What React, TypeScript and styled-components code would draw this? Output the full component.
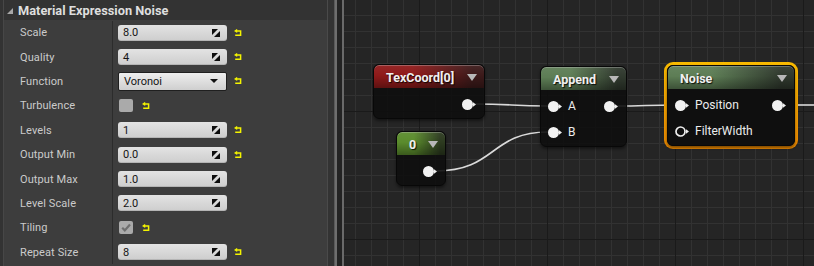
import React from "react";
import styled, { createGlobalStyle } from "styled-components";

const Global = createGlobalStyle`
  html, body { margin: 0; padding: 0; background: #252525; }
  body { font-family: Roboto, "Liberation Sans", sans-serif; }
  #root { width: 814px; height: 266px; }
`;

const Page = styled.div`
  display: flex;
  width: 814px;
  height: 266px;
  overflow: hidden;
`;

/* ---------- details panel ---------- */

const Panel = styled.aside`
  width: 337px;
  flex: none;
  box-sizing: border-box;
  display: flex;
  padding-left: 3px;
  background: #333333;
  border-right: 2px solid #6e6e6e;
`;

const PanelBody = styled.div`
  width: 325px;
  flex: none;
  box-sizing: border-box;
  display: flex;
  flex-direction: column;
  border-left: 1px solid #474747;
  border-right: 1px solid #4a4a4a;
`;

const Gutter = styled.div`
  flex: 1;
  border-right: 1px solid #595959;
`;

const CategoryHeader = styled.div`
  height: 20px;
  flex: none;
  display: flex;
  align-items: center;
  gap: 5px;
  padding-left: 3px;
  font-size: 12.8px;
  font-weight: 700;
  color: #dedede;
`;

const Collapse = styled.span`
  width: 0;
  height: 0;
  border-left: 6px solid transparent;
  border-bottom: 6px solid #a8a8a8;
  margin-top: 1px;
`;

const PropertyList = styled.div`
  flex: 1;
  display: grid;
  grid-auto-rows: 24.4px;
  align-content: start;
  padding-top: 0.5px;
  background: #3d3d3d;
`;

const Row = styled.div`
  display: grid;
  grid-template-columns: 109px 1fr;
`;

const Label = styled.div`
  display: flex;
  align-items: center;
  padding-left: 16px;
  border-right: 1px solid #2c2c2c;
  font-size: 11px;
  color: #cbcbcb;
  letter-spacing: 0.1px;
`;

const Value = styled.div`
  display: flex;
  align-items: center;
  gap: 7px;
  padding-left: 5px;
`;

const NumberBox = styled.div`
  width: 109px;
  height: 16px;
  box-sizing: border-box;
  display: flex;
  align-items: center;
  justify-content: space-between;
  padding: 0 7px 0 5px;
  border-radius: 3px;
  background: linear-gradient(to bottom, #e3e3e3, #cdcdcd);
  box-shadow: inset 0 -1px 0 rgba(0, 0, 0, 0.12);
  font-size: 11px;
  color: #141414;
`;

const ComboBox = styled.div`
  width: 109px;
  height: 19px;
  box-sizing: border-box;
  display: flex;
  align-items: center;
  justify-content: space-between;
  padding: 0 8px 0 5px;
  border: 1px solid #1f1f1f;
  border-radius: 2px;
  background: linear-gradient(to bottom, #eeeeee, #cfcfcf);
  font-size: 11px;
  color: #141414;
`;

const ComboArrow = styled.span`
  width: 0;
  height: 0;
  border-left: 4px solid transparent;
  border-right: 4px solid transparent;
  border-top: 4px solid #111;
`;

const CheckBox = styled.div`
  width: 14px;
  height: 13px;
  margin: 0 2px 0 1px;
  border-radius: 2px;
  background: #aaaaaa;
  display: flex;
  align-items: center;
  justify-content: center;
`;

const DragIcon = () => (
  <svg width="8" height="8" viewBox="0 0 8 8">
    <polygon points="0,0 6,0 0,6" fill="#0d0d0d" />
    <polygon points="8,2 8,8 2,8" fill="#0d0d0d" />
  </svg>
);

const ResetIcon = () => (
  <svg width="8" height="8" viewBox="0 0 8 8" style={{ flex: "none" }}>
    <path d="M2.6 1.9 H6.6 V6.3 H1.2" stroke="#f4f400" strokeWidth="1.5" fill="none" />
    <polygon points="0,1.9 3.2,-0.2 3.2,4" fill="#f4f400" />
  </svg>
);

const CheckMark = () => (
  <svg width="12" height="11" viewBox="0 0 12 11">
    <path d="M2.2 5.8 L4.8 8.4 L10 2.6" stroke="#6e6e6e" strokeWidth="2.2" fill="none" />
  </svg>
);

type Prop =
  | { label: string; kind: "number"; value: string; reset?: boolean }
  | { label: string; kind: "combo"; value: string; reset?: boolean }
  | { label: string; kind: "check"; checked: boolean; reset?: boolean };

const props: Prop[] = [
  { label: "Scale", kind: "number", value: "8.0", reset: true },
  { label: "Quality", kind: "number", value: "4", reset: true },
  { label: "Function", kind: "combo", value: "Voronoi", reset: true },
  { label: "Turbulence", kind: "check", checked: false, reset: true },
  { label: "Levels", kind: "number", value: "1", reset: true },
  { label: "Output Min", kind: "number", value: "0.0", reset: true },
  { label: "Output Max", kind: "number", value: "1.0" },
  { label: "Level Scale", kind: "number", value: "2.0" },
  { label: "Tiling", kind: "check", checked: true, reset: true },
  { label: "Repeat Size", kind: "number", value: "8", reset: true },
];

/* ---------- graph ---------- */

const Splitter = styled.div`
  width: 5px;
  flex: none;
  background: #232323;
  border-right: 2px solid #6a6a6a;
`;

const Graph = styled.main`
  flex: 1;
  position: relative;
  overflow: hidden;
  background-color: #252525;
  background-image:
    linear-gradient(to right, #1a1a1a 1px, transparent 1px),
    linear-gradient(to bottom, #1a1a1a 1px, transparent 1px),
    linear-gradient(to right, #323232 1px, transparent 1px),
    linear-gradient(to bottom, #323232 1px, transparent 1px);
  background-size: 128px 128px, 128px 128px, 16px 16px, 16px 16px;
  background-position: 75px 0, 0 111px, 11px 0, 0 15px;
`;

const Wires = styled.svg`
  position: absolute;
  left: 0;
  top: 0;
  width: 100%;
  height: 100%;
`;

const Spot = styled.div<{ $x: number; $y: number }>`
  position: absolute;
  left: ${(p) => p.$x}px;
  top: ${(p) => p.$y}px;
`;

const SelectedFrame = styled.div`
  border: 3px solid transparent;
  border-radius: 9px;
  background:
    linear-gradient(#1c1c1c, #1c1c1c) padding-box,
    linear-gradient(to bottom, #f8ba00, #e88600) border-box;
`;

const Node = styled.div<{ $w: number }>`
  width: ${(p) => p.$w}px;
  box-sizing: border-box;
  border: 1px solid #080808;
  border-radius: 6px;
  background: rgba(14, 14, 14, 0.9);
  box-shadow: 0 2px 3px rgba(0, 0, 0, 0.45);
  overflow: hidden;
`;

const tones = {
  red: ["#8f1a1a", "#3c1a1a"],
  sage: ["#5d7d55", "#2f382d"],
  lime: ["#5a8b2c", "#2c3a1f"],
} as const;

const NodeHeader = styled.div<{ $tone: keyof typeof tones }>`
  height: 23px;
  box-sizing: border-box;
  display: flex;
  align-items: center;
  justify-content: space-between;
  padding: 1px 7px 0 12px;
  border-radius: 5px 5px 0 0;
  background:
    linear-gradient(to bottom, rgba(255, 255, 255, 0.06), rgba(0, 0, 0, 0) 45%, rgba(0, 0, 0, 0.35)),
    linear-gradient(to right, ${(p) => tones[p.$tone][0]} 0%, ${(p) => tones[p.$tone][0]} 35%, ${(p) => tones[p.$tone][1]} 90%);
  box-shadow: inset 0 1px 0 rgba(200, 200, 200, 0.35);
  font-size: 12.5px;
  font-weight: 700;
  color: #f0f0f0;
  text-shadow: 1px 1px 1px rgba(0, 0, 0, 0.85);
`;

const HeaderArrow = styled.span`
  width: 0;
  height: 0;
  border-left: 5.5px solid transparent;
  border-right: 5.5px solid transparent;
  border-top: 7px solid #b8b8b8;
`;

const NodeBody = styled.div`
  padding: 3px 0 1px;
`;

const PinRow = styled.div`
  height: 26px;
  display: flex;
  align-items: center;
  justify-content: space-between;
  padding: 0 8px 0 7px;
`;

const PinGroup = styled.div<{ $end?: boolean }>`
  display: flex;
  align-items: center;
  gap: 6px;
  margin-left: ${(p) => (p.$end ? "auto" : "0")};
  font-size: 12px;
  color: #ececec;
`;

const Pin = ({ hollow }: { hollow?: boolean }) => (
  <svg width="14" height="11" viewBox="0 0 14 11" style={{ flex: "none" }}>
    {hollow ? (
      <circle cx="5.5" cy="5.5" r="4.5" fill="none" stroke="#efefef" strokeWidth="1.7" />
    ) : (
      <circle cx="5.5" cy="5.5" r="5.5" fill="#f2f2f2" />
    )}
    <polygon points="11,3.3 14,5.5 11,7.7" fill="#efefef" />
  </svg>
);

export default function App() {
  return (
    <>
      <Global />
      <Page>
        <Panel>
          <PanelBody>
            <CategoryHeader>
              <Collapse />
              Material Expression Noise
            </CategoryHeader>
            <PropertyList>
              {props.map((p) => (
                <Row key={p.label}>
                  <Label>{p.label}</Label>
                  <Value>
                    {p.kind === "number" && (
                      <NumberBox>
                        {p.value}
                        <DragIcon />
                      </NumberBox>
                    )}
                    {p.kind === "combo" && (
                      <ComboBox>
                        {p.value}
                        <ComboArrow />
                      </ComboBox>
                    )}
                    {p.kind === "check" && <CheckBox>{p.checked && <CheckMark />}</CheckBox>}
                    {p.reset && <ResetIcon />}
                  </Value>
                </Row>
              ))}
            </PropertyList>
          </PanelBody>
          <Gutter />
        </Panel>
        <Splitter />
        <Graph>
          <Wires viewBox="0 0 470 266">
            <g stroke="#dadada" strokeWidth="1.6" fill="none">
              <path d="M131 104 C168 104 167 106 204 106" />
              <path d="M273 106 C300 106 304 105 331 105" />
              <path d="M441 105 L472 105" />
              <path d="M92 171 C152 171 146 132 204 132" />
            </g>
          </Wires>

          <Spot $x={29} $y={64}>
            <Node $w={112}>
              <NodeHeader $tone="red">
                TexCoord[0]
                <HeaderArrow />
              </NodeHeader>
              <NodeBody>
                <PinRow>
                  <PinGroup $end>
                    <Pin />
                  </PinGroup>
                </PinRow>
              </NodeBody>
            </Node>
          </Spot>

          <Spot $x={52} $y={131}>
            <Node $w={50}>
              <NodeHeader $tone="lime">
                0
                <HeaderArrow />
              </NodeHeader>
              <NodeBody>
                <PinRow>
                  <PinGroup $end>
                    <Pin />
                  </PinGroup>
                </PinRow>
              </NodeBody>
            </Node>
          </Spot>

          <Spot $x={196} $y={66}>
            <Node $w={87}>
              <NodeHeader $tone="sage">
                Append
                <HeaderArrow />
              </NodeHeader>
              <NodeBody>
                <PinRow>
                  <PinGroup>
                    <Pin />A
                  </PinGroup>
                  <PinGroup $end>
                    <Pin />
                  </PinGroup>
                </PinRow>
                <PinRow>
                  <PinGroup>
                    <Pin />B
                  </PinGroup>
                </PinRow>
              </NodeBody>
            </Node>
          </Spot>

          <Spot $x={320} $y={62}>
            <SelectedFrame>
              <Node $w={128}>
                <NodeHeader $tone="sage">
                  Noise
                  <HeaderArrow />
                </NodeHeader>
                <NodeBody>
                  <PinRow>
                    <PinGroup>
                      <Pin />
                      Position
                    </PinGroup>
                    <PinGroup $end>
                      <Pin />
                    </PinGroup>
                  </PinRow>
                  <PinRow>
                    <PinGroup>
                      <Pin hollow />
                      FilterWidth
                    </PinGroup>
                  </PinRow>
                </NodeBody>
              </Node>
            </SelectedFrame>
          </Spot>
        </Graph>
      </Page>
    </>
  );
}
